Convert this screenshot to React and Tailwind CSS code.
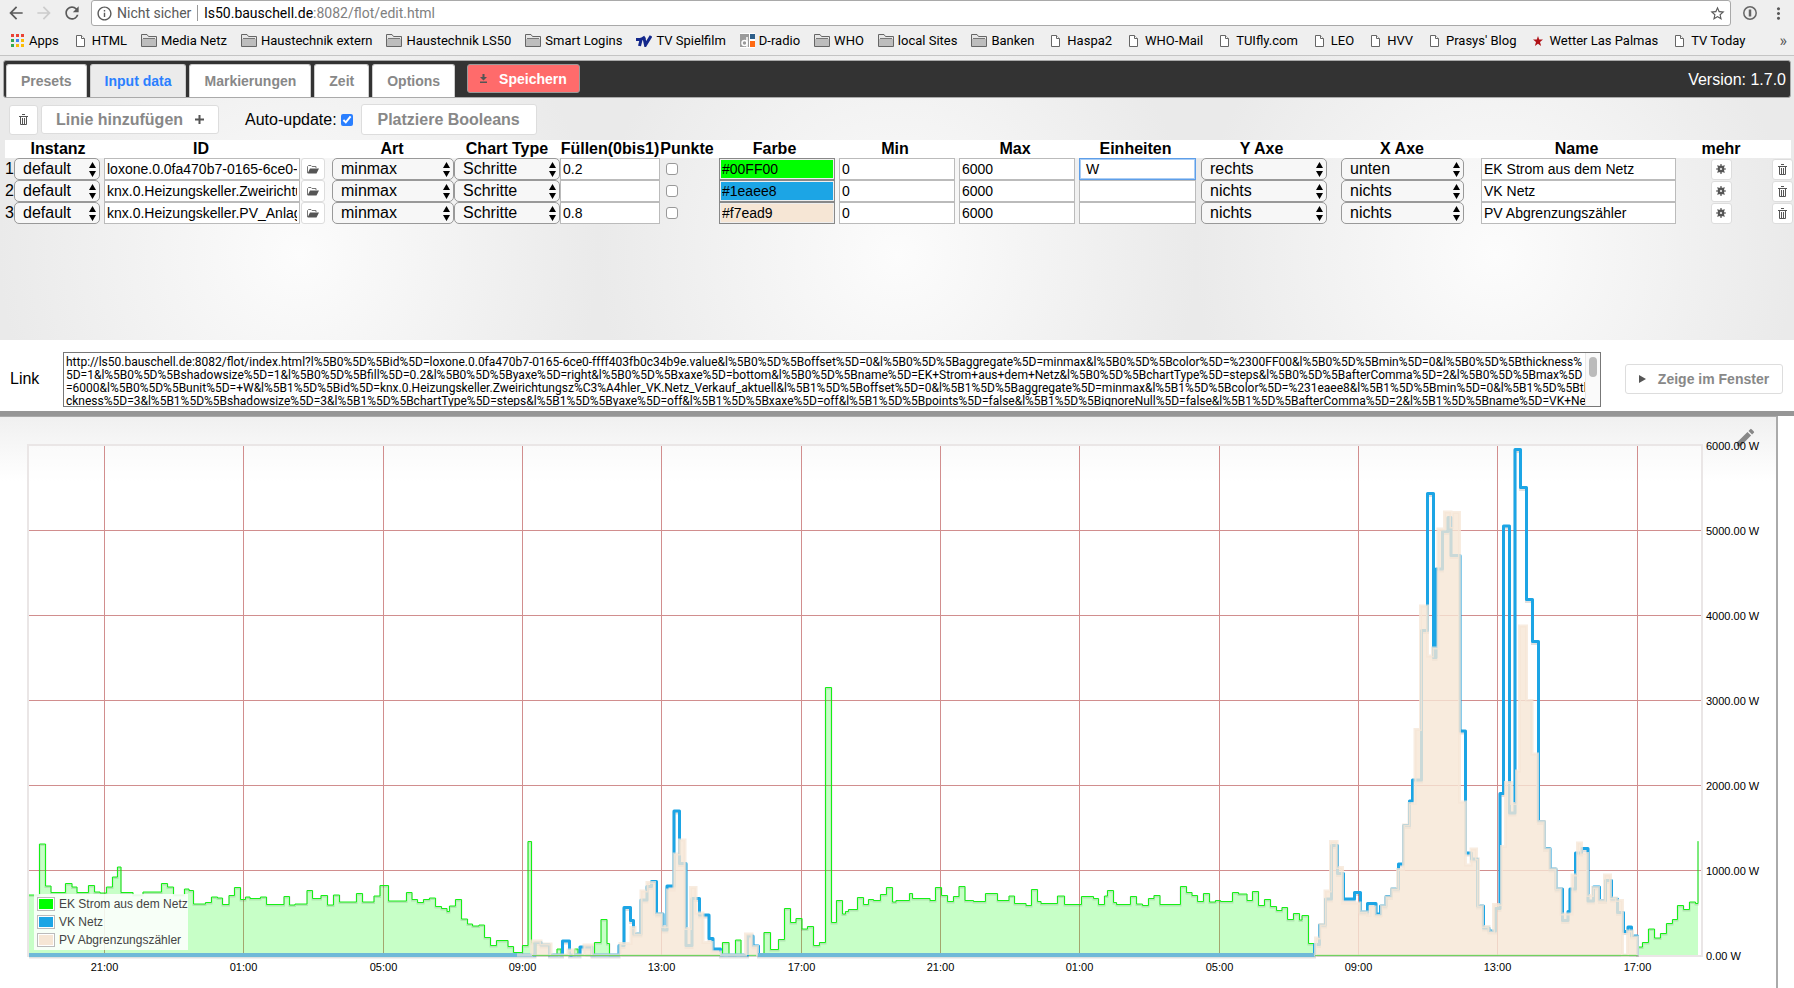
import { useState } from 'react'
import { MdArrowBack, MdArrowForward, MdRefresh, MdInfoOutline, MdStarBorder, MdMoreVert, MdEdit } from 'react-icons/md'

// ---- Data -------------------------------------------------------------------
const BOOKMARKS = [
    { label: 'Apps', icon: 'apps' },
    { label: 'HTML', icon: 'page' },
    { label: 'Media Netz', icon: 'folder' },
    { label: 'Haustechnik extern', icon: 'folder' },
    { label: 'Haustechnik LS50', icon: 'folder' },
    { label: 'Smart Logins', icon: 'folder' },
    { label: 'TV Spielfilm', icon: 'tv' },
    { label: 'D-radio', icon: 'dradio' },
    { label: 'WHO', icon: 'folder' },
    { label: 'local Sites', icon: 'folder' },
    { label: 'Banken', icon: 'folder' },
    { label: 'Haspa2', icon: 'page' },
    { label: 'WHO-Mail', icon: 'page' },
    { label: 'TUIfly.com', icon: 'page' },
    { label: 'LEO', icon: 'page' },
    { label: 'HVV', icon: 'page' },
    { label: "Prasys' Blog", icon: 'page' },
    { label: 'Wetter Las Palmas', icon: 'star' },
    { label: 'TV Today', icon: 'page' },
]

const TABS = ['Presets', 'Input data', 'Markierungen', 'Zeit', 'Options']

const COLUMNS = [
    { label: '', width: 9 },
    { label: 'Instanz', width: 88 },
    { label: 'ID', width: 198 },
    { label: '', width: 30 },
    { label: 'Art', width: 124 },
    { label: 'Chart Type', width: 106 },
    { label: 'Füllen(0bis1)', width: 100 },
    { label: 'Punkte', width: 54 },
    { label: 'Farbe', width: 121 },
    { label: 'Min', width: 120 },
    { label: 'Max', width: 120 },
    { label: 'Einheiten', width: 121 },
    { label: 'Y Axe', width: 131 },
    { label: 'X Axe', width: 150 },
    { label: 'Name', width: 199 },
    { label: 'mehr', width: 90 },
    { label: '', width: 25 },
]

const LINES = [
    { id: 'loxone.0.0fa470b7-0165-6ce0-ffff403fb0c34b9e.value', fill: '0.2', color: '#00FF00', unit: ' W', yaxe: 'rechts', xaxe: 'unten', name: 'EK Strom aus dem Netz' },
    { id: 'knx.0.Heizungskeller.Zweirichtungszähler_VK.Netz_Verkauf_aktuell', fill: '', color: '#1eaee8', unit: '', yaxe: 'nichts', xaxe: 'nichts', name: 'VK Netz' },
    { id: 'knx.0.Heizungskeller.PV_Anlage.Abgrenzungszähler', fill: '0.8', color: '#f7ead9', unit: '', yaxe: 'nichts', xaxe: 'nichts', name: 'PV Abgrenzungszähler' },
]

const COLOR_CLASS = {
    '#00FF00': 'bg-[#00ff00]',
    '#1eaee8': 'bg-[#1ca5e5]',
    '#f7ead9': 'bg-[#f6e6d5]',
}

const LINK = [
    'http://ls50.bauschell.de:8082/flot/index.html?l%5B0%5D%5Bid%5D=loxone.0.0fa470b7-0165-6ce0-ffff403fb0c34b9e.value&l%5B0%5D%5Boffset%5D=0&l%5B0%5D%5Baggregate%5D=minmax&l%5B0%5D%5Bcolor%5D=%2300FF00&l%5B0%5D%5Bmin%5D=0&l%5B0%5D%5Bthickness%',
    '5D=1&l%5B0%5D%5Bshadowsize%5D=1&l%5B0%5D%5Bfill%5D=0.2&l%5B0%5D%5Byaxe%5D=right&l%5B0%5D%5Bxaxe%5D=bottom&l%5B0%5D%5Bname%5D=EK+Strom+aus+dem+Netz&l%5B0%5D%5BchartType%5D=steps&l%5B0%5D%5BafterComma%5D=2&l%5B0%5D%5Bmax%5D',
    '=6000&l%5B0%5D%5Bunit%5D=+W&l%5B1%5D%5Bid%5D=knx.0.Heizungskeller.Zweirichtungsz%C3%A4hler_VK.Netz_Verkauf_aktuell&l%5B1%5D%5Boffset%5D=0&l%5B1%5D%5Baggregate%5D=minmax&l%5B1%5D%5Bcolor%5D=%231eaee8&l%5B1%5D%5Bmin%5D=0&l%5B1%5D%5Bthi',
    'ckness%5D=3&l%5B1%5D%5Bshadowsize%5D=3&l%5B1%5D%5BchartType%5D=steps&l%5B1%5D%5Byaxe%5D=off&l%5B1%5D%5Bxaxe%5D=off&l%5B1%5D%5Bpoints%5D=false&l%5B1%5D%5BignoreNull%5D=false&l%5B1%5D%5BafterComma%5D=2&l%5B1%5D%5Bname%5D=VK+Netz',
].join('\n')

// Step series: x, y pairs in chart units, each value holds until the next x
const EK_STROM = [
    29, 895, 39.5, 844, 45.5, 886, 51, 892.5, 65.5, 883.5, 72, 887, 77, 892.5, 88.5, 885.5, 94.5, 892, 100, 893, 106.5, 887, 112.5, 877, 117.5, 867, 121, 892.5, 133, 895,
    143, 892, 161.5, 883.5, 167.5, 887, 173.5, 895, 184.5, 889, 189, 890.5, 193.5, 904, 205.5, 902.5, 211.5, 897, 217.5, 898, 222.5, 904.5, 229, 895.5, 234.5, 887.5,
    240.5, 899.5, 245.5, 897, 250, 898.5, 260.5, 897, 266.5, 904.5, 284, 896.5, 289.5, 905, 295, 904, 307, 890.5, 312.5, 898.5, 321, 895.5, 327.5, 905, 333.5, 895,
    339.5, 902, 356.5, 893.5, 362.5, 902, 374, 896, 380, 885.5, 388.5, 901, 406.5, 892.5, 412, 899.5, 417.5, 902.5, 423.5, 899.5, 429.5, 898, 435.5, 906.5, 441.5, 908.5,
    447, 911.5, 449.5, 906, 455.5, 899.5, 461.5, 919, 467.5, 924, 472.5, 926, 479, 925, 484.5, 937.5, 490.5, 945.5, 496.5, 940.5, 508, 946.5, 513.5, 952.5, 522.5, 945.5,
    528, 841.5, 531.5, 943, 536, 955, 557, 949, 561, 955, 574.5, 949, 578, 955, 594.5, 942.5, 601, 919.5, 607, 943.5, 609.5, 955, 722.5, 942.5, 729, 955, 735.5, 940,
    741, 955, 764, 932.5, 770.5, 949.5, 778.5, 939.5, 784.5, 908.5, 790.5, 922.5, 796, 918.5, 802, 929, 807.5, 926.5, 813.5, 945.5, 819.5, 942.5, 825.5, 687.5,
    831.5, 922.5, 836.5, 900.5, 842.5, 914, 845.5, 911.5, 848.5, 909.5, 857.5, 897.5, 863.5, 904.5, 868.5, 899.5, 873.5, 900.5, 880.5, 894.5, 886.5, 887.5, 892.5, 902,
    896, 900.5, 909.5, 893.5, 912.5, 898.5, 930, 900.5, 935.5, 887.5, 941.5, 895.5, 947.5, 901.5, 953.5, 896.5, 959, 886.5, 965, 900.5, 973.5, 901.5, 985.5, 893.5,
    997.5, 900.5, 1009, 896, 1014.5, 903.5, 1026, 905.5, 1031.5, 889.5, 1037.5, 901.5, 1041, 903.5, 1057.5, 896, 1064.5, 904.5, 1081.5, 896.5, 1093.5, 898.5,
    1098.5, 904.5, 1104.5, 896, 1107.5, 890.5, 1113.5, 902.5, 1116.5, 904.5, 1130.5, 896.5, 1136.5, 904, 1142.5, 905.5, 1148.5, 898.5, 1154, 895.5, 1160, 904.5,
    1180.5, 886.5, 1186.5, 892.5, 1192, 895.5, 1197.5, 901.5, 1203.5, 893.5, 1209.5, 902, 1215.5, 900.5, 1220.5, 901.5, 1232.5, 892.5, 1238.5, 894, 1247, 900.5,
    1252.5, 891.5, 1258.5, 905.5, 1264.5, 899.5, 1270.5, 906.5, 1276.5, 910.5, 1282, 907.5, 1287.5, 919.5, 1293.5, 913.5, 1299.5, 920, 1302, 915.5, 1308.5, 943.5,
    1314, 955, 1637.5, 947, 1642.5, 942.5, 1648.5, 929, 1654.5, 938, 1660.5, 933.5, 1666.5, 923.5, 1672.5, 919.5, 1677.5, 905.5, 1683.5, 909.5, 1689.5, 902,
    1695.5, 903.5, 1698, 841,
]

const VK_NETZ = [
    29, 955, 535, 942.5, 541, 945, 549.5, 955, 562.5, 941, 569.5, 955, 580, 947, 592, 955, 619, 945.5, 624, 907.5, 630.5, 920.5, 633.5, 934, 641, 900, 647, 886.5,
    651.5, 881.5, 656.5, 914, 663, 930, 667, 886, 674, 811, 679.5, 863.5, 686, 945.5, 692, 898.5, 699.5, 915, 709, 938.5, 713, 949, 720.5, 955, 747.5, 936, 753, 946,
    758.5, 955, 1314.5, 944.5, 1319.5, 925, 1325.5, 899, 1331.5, 845.5, 1337.5, 873.5, 1343.5, 899, 1354.5, 892.5, 1360.5, 912, 1367.5, 903.5, 1376, 914, 1380.5, 906,
    1386, 896.5, 1391.5, 889, 1398.5, 864, 1403.5, 825.5, 1409.5, 801, 1412.5, 780, 1421.5, 630.5, 1427.5, 493.5, 1433.5, 657.5, 1436, 569, 1442.5, 531.5, 1448, 517.5,
    1451, 555.5, 1460, 731, 1465.5, 853, 1471.5, 859, 1477.5, 906, 1483.5, 928, 1489, 931, 1495.5, 908.5, 1500, 793.5, 1503.5, 526, 1509.5, 813, 1515, 449.5,
    1520.5, 487.5, 1526.5, 599.5, 1532.5, 641.5, 1538.5, 821.5, 1544.5, 848.5, 1550, 869, 1556, 889, 1562.5, 920.5, 1568, 911.5, 1570, 889, 1575.5, 853, 1581.5, 848.5,
    1588, 901, 1593.5, 887, 1599.5, 900.5, 1605.5, 880.5, 1611.5, 899, 1617.5, 912.5, 1623.5, 931.5, 1628, 927, 1631.5, 936, 1637.5, 955,
]

const PV_ZAEHLER = [
    517, 955, 531.5, 941, 541, 944, 551, 955, 568, 950, 574, 955, 584, 945, 592.5, 955, 620, 943.5, 631, 927.5, 635, 934, 641, 891, 647, 882.5, 654.5, 914, 662, 926.5,
    667.5, 890, 674, 854, 679.5, 840, 685, 928.5, 690.5, 887.5, 696, 913, 703, 942.5, 712, 952, 720.5, 955, 745.5, 934, 752, 946.5, 757.5, 955, 1315.5, 938, 1320, 924.5,
    1325, 891, 1330.5, 841.5, 1337, 867.5, 1342.5, 903, 1360, 912, 1367.5, 915.5, 1370, 907, 1375, 915.5, 1381.5, 906, 1386, 897, 1391.5, 889, 1397.5, 869.5, 1403.5, 825,
    1409, 803.5, 1415, 729.5, 1420.5, 606, 1427.5, 656, 1432.5, 648, 1438, 529, 1444.5, 512, 1451, 527, 1452.5, 512.5, 1459.5, 802, 1465.5, 865, 1471, 849, 1476.5, 859,
    1478.5, 906, 1482.5, 926.5, 1489, 932, 1493.5, 904.5, 1501.5, 846.5, 1505.5, 782.5, 1511.5, 803.5, 1516.5, 771, 1519.5, 626, 1526.5, 700.5, 1532, 754, 1537.5, 821.5,
    1544.5, 849, 1549.5, 869, 1556, 889, 1561, 914, 1572, 875, 1577.5, 843, 1581.5, 853.5, 1587.5, 895.5, 1592.5, 887.5, 1598.5, 900.5, 1604.5, 875, 1610.5, 898,
    1616.5, 900.5, 1622.5, 955, 1627.5, 931, 1632.5, 937, 1637.5, 955,
]

const X_TICKS = [
    [104.5, '21:00'], [243.5, '01:00'], [383.5, '05:00'], [522.5, '09:00'], [661.5, '13:00'], [801.5, '17:00'],
    [940.5, '21:00'], [1079.5, '01:00'], [1219.5, '05:00'], [1358.5, '09:00'], [1497.5, '13:00'], [1637.5, '17:00'],
]

const Y_TICKS = [
    [445, '6000.00 W'], [530.5, '5000.00 W'], [615.5, '4000.00 W'], [700.5, '3000.00 W'],
    [785.5, '2000.00 W'], [870.5, '1000.00 W'], [955, '0.00 W'],
]

const LEGEND = [
    { label: 'EK Strom aus dem Netz', color: '#00ff00' },
    { label: 'VK Netz', color: '#1ca5e5' },
    { label: 'PV Abgrenzungszähler', color: '#f6e6d5' },
]

// ---- Helpers ----------------------------------------------------------------
const BASE = 955

function stepPath(series) {
    let d = `M${series[0]} ${series[1]}`
    for (let i = 2; i < series.length; i += 2) d += `H${series[i]}V${series[i + 1]}`
    return d
}

function areaPath(series) {
    return `${stepPath(series)}V${BASE}H${series[0]}Z`
}

// ---- Icons ------------------------------------------------------------------
function TrashIcon() {
    return (
        <svg width="9" height="11" viewBox="0 0 9 11" fill="none" stroke="#555">
            <path d="M0 2.5h9M3 .5h3" />
            <path d="M1.5 3v7.5h6V3M3.5 4v6M5.5 4v6" />
        </svg>
    )
}

function GearIcon() {
    return (
        <svg width="10" height="10" viewBox="0 0 10 10" fill="none" stroke="#555">
            <circle cx="5" cy="5" r="2.4" strokeWidth="2" />
            <path d="M5 0v10M0 5h10M1.5 1.5l7 7M8.5 1.5l-7 7" strokeWidth="1.2" />
            <circle cx="5" cy="5" r="1" fill="#fff" stroke="none" />
        </svg>
    )
}

function OpenFolderIcon() {
    return (
        <svg width="12" height="9" viewBox="0 0 12 9">
            <path d="M.5 8V1.5l1-1h2.5l1 1h4V3" fill="none" stroke="#777" />
            <path d="M3 3.5h9L9.5 8.5H.5z" fill="#555" />
        </svg>
    )
}

function BookmarkIcon({ type }) {
    if (type === 'apps') {
        const colors = ['#ea4335', '#ea4335', '#ea4335', '#34a853', '#4285f4', '#fbbc05', '#34a853', '#fbbc05', '#fbbc05']
        return (
            <svg width="13" height="13" viewBox="0 0 13 13">
                {colors.map((c, i) => (
                    <rect key={i} x={(i % 3) * 5} y={Math.floor(i / 3) * 5} width="3" height="3" fill={c} />
                ))}
            </svg>
        )
    }
    if (type === 'folder') {
        return (
            <svg width="16" height="13" viewBox="0 0 16 13">
                <path d="M.5 12.5V.5H6l1.5 2h8v10z" fill="#e6e6e6" stroke="#666" />
                <path d="M1 5h14v7H1z" fill="#bdbdbd" />
                <path d="M2 4.5h12" stroke="#777" />
            </svg>
        )
    }
    if (type === 'tv') {
        return (
            <svg width="16" height="12" viewBox="0 0 16 12" fill="none" stroke="#14288c">
                <path d="M0 4.5h5L9 2M5.5 3L3.5 11" strokeWidth="3" />
                <path d="M8 3l1.5 7L15 1" strokeWidth="3" />
            </svg>
        )
    }
    if (type === 'dradio') {
        return (
            <svg width="15" height="15" viewBox="0 0 15 15">
                <path d="M0 0h15v15H0z" fill="#fff" />
                <path d="M0 1h9v13H0z" fill="#9b9b9b" />
                <circle cx="4.5" cy="10" r="2.5" fill="none" stroke="#fff" strokeWidth="1.5" />
                <path d="M7 4v10" stroke="#fff" strokeWidth="1.5" />
                <path d="M10 1h5v5h-5z" fill="#2d5f8b" />
                <path d="M10 8h5v6h-5z" fill="#ff6a13" />
            </svg>
        )
    }
    if (type === 'star') {
        return (
            <svg width="10" height="10" viewBox="0 0 10 10">
                <path d="M5 0l1.2 3.6H10L7 6l1.1 4L5 7.7 1.9 10 3 6 0 3.6h3.8z" fill="#b01116" />
            </svg>
        )
    }
    return (
        <svg width="9" height="12" viewBox="0 0 9 12" fill="#fff" stroke="#666">
            <path d="M.5.5h5l3 3v8h-8z" />
            <path d="M5.5.5v3h3" />
        </svg>
    )
}

// ---- Browser chrome ---------------------------------------------------------
function BrowserBar() {
    return (
        <header className="bg-[#efefef] border-b border-[#c4c4c4] font-['Roboto',sans-serif]">
            <div className="flex items-center h-[26px] pl-1.5 text-[#5a5a5a]">
                <button aria-label="Zurück" className="w-7"><MdArrowBack size={20} /></button>
                <button aria-label="Vor" className="w-7 text-[#ccc]"><MdArrowForward size={20} /></button>
                <button aria-label="Neu laden" className="w-[29px]"><MdRefresh size={20} /></button>
                <div className="flex flex-1 items-center h-[26px] bg-white border border-[#a9a9a9] rounded-[3px] pl-1 pr-1">
                    <MdInfoOutline size={17} />
                    <span className="ml-1 text-sm">Nicht sicher</span>
                    <span className="mx-1.5 h-4 w-px bg-[#999]" />
                    <span className="flex-1 text-sm text-[#808080]">
                        <span className="text-black">ls50.bauschell.de</span>:8082/flot/edit.html
                    </span>
                    <button aria-label="Lesezeichen"><MdStarBorder size={17} /></button>
                </div>
                <button aria-label="Passwörter" className="ml-3">
                    <svg width="14" height="14" viewBox="0 0 14 14" fill="none" stroke="#666">
                        <circle cx="7" cy="7" r="6.2" strokeWidth="1.5" />
                        <path d="M7 3.5v7" strokeWidth="2.5" />
                    </svg>
                </button>
                <button aria-label="Menü" className="ml-3 mr-1.5"><MdMoreVert size={19} /></button>
            </div>
            <nav className="flex items-center h-[29px] pl-[10px] pr-[7px] text-[13px] text-black whitespace-nowrap">
                <div className="flex flex-1 items-center gap-[14px]">
                    {BOOKMARKS.map((b) => (
                        <a key={b.label} href="#" className="flex items-center gap-1">
                            <span className="flex min-w-[15px] justify-center"><BookmarkIcon type={b.icon} /></span>
                            {b.label}
                        </a>
                    ))}
                </div>
                <button aria-label="Weitere Lesezeichen" className="text-base text-[#555]">»</button>
            </nav>
        </header>
    )
}

// ---- Form controls ----------------------------------------------------------
function Select({ value, label }) {
    return (
        <div className="relative">
            <select
                aria-label={label}
                defaultValue={value}
                className="block w-full h-[22px] appearance-none rounded-[5px] border border-[#999] bg-[#f7f7f7] pl-2 text-base leading-5"
            >
                <option>{value}</option>
            </select>
            <svg className="pointer-events-none absolute right-1 top-1 h-[15px] w-[7px]" viewBox="0 0 7 15">
                <path d="M3.5 0L7 6H0zM3.5 15L7 9H0z" fill="#000" />
            </svg>
        </div>
    )
}

function TextInput({ value, label, className = 'bg-white border-[#bbb]' }) {
    return (
        <input
            type="text"
            aria-label={label}
            defaultValue={value}
            className={`block w-full h-[22px] border px-0.5 text-sm outline-none ${className}`}
        />
    )
}

function IconButton({ label, className = '', children }) {
    return (
        <button aria-label={label} className={`flex items-center justify-center rounded-[3px] border border-[#ddd] bg-white ${className}`}>
            {children}
        </button>
    )
}

// ---- Input data -------------------------------------------------------------
function TabBar({ active, onSelect }) {
    return (
        <div className="flex h-[38px] items-end rounded-[3px] border border-[#aaa] bg-[#333] pl-0.5 pr-1">
            <div className="flex items-end gap-[3px] text-sm font-bold">
                {TABS.map((t) => (
                    <button
                        key={t}
                        onClick={() => onSelect(t)}
                        className={`h-[33px] rounded-t-[3px] border border-b-0 border-[#ccc] px-[14px] ${t === active ? 'bg-[#ebebeb] text-[#2a7fff]' : 'bg-white text-[#888]'}`}
                    >
                        {t}
                    </button>
                ))}
            </div>
            <button className="ml-3 mb-1 flex h-[29px] w-[113px] items-center gap-3 rounded-[3px] border border-[#999] bg-[#ff6b6b] pl-3 text-sm font-bold text-white">
                <svg width="7" height="9" viewBox="0 0 7 9" fill="#555">
                    <path d="M2.5 0h2v3H7L3.5 6.5 0 3h2.500zM0 7.5h7V9H0z" />
                </svg>
                Speichern
            </button>
            <span className="ml-auto mb-[5px] text-base text-white">Version: 1.7.0</span>
        </div>
    )
}

function LinesTable() {
    return (
        <table className="w-full table-fixed text-black">
            <colgroup>
                {COLUMNS.map((c, i) => <col key={i} style={{ width: c.width }} />)}
            </colgroup>
            <thead>
                <tr className="h-[18px] bg-white">
                    {COLUMNS.map((c, i) => (
                        <th key={i} className="p-0 text-base leading-[18px] font-bold whitespace-nowrap">{c.label}</th>
                    ))}
                </tr>
            </thead>
            <tbody>
                {LINES.map((l, i) => (
                    <tr key={l.name} className="h-[22px]">
                        <td className="p-0 text-base leading-5">{i + 1}</td>
                        <td className="p-0 pr-0.5"><Select value="default" label="Instanz" /></td>
                        <td className="p-0 pl-0.5"><TextInput value={l.id} label="ID" /></td>
                        <td className="p-0 pl-px"><IconButton label="ID wählen" className="h-[22px] w-6"><OpenFolderIcon /></IconButton></td>
                        <td className="p-0 pl-0.5"><Select value="minmax" label="Art" /></td>
                        <td className="p-0"><Select value="Schritte" label="Chart Type" /></td>
                        <td className="p-0"><TextInput value={l.fill} label="Füllen" /></td>
                        <td className="p-0 pl-1.5">
                            <input type="checkbox" aria-label="Punkte" className="block size-3 appearance-none rounded-[3px] border border-[#999] bg-white" />
                        </td>
                        <td className="p-0 pl-[5px]">
                            <TextInput value={l.color} label="Farbe" className={`border-[#888] shadow-[inset_0_0_0_1px_#eee] ${COLOR_CLASS[l.color]}`} />
                        </td>
                        <td className="p-0 pl-1"><TextInput value="0" label="Min" /></td>
                        <td className="p-0 pl-1"><TextInput value="6000" label="Max" /></td>
                        <td className="p-0 pl-1">
                            <TextInput
                                value={l.unit}
                                label="Einheiten"
                                className={l.unit ? 'bg-white border-[#5e9ee8] shadow-[inset_0_0_0_1px_#a9cdf5]' : 'bg-white border-[#bbb]'}
                            />
                        </td>
                        <td className="p-0 pl-[5px]"><Select value={l.yaxe} label="Y Axe" /></td>
                        <td className="p-0 pl-[14px] pr-[13px]"><Select value={l.xaxe} label="X Axe" /></td>
                        <td className="p-0 pl-1"><TextInput value={l.name} label="Name" /></td>
                        <td className="p-0"><IconButton label="Mehr" className="mx-auto h-[21px] w-[21px]"><GearIcon /></IconButton></td>
                        <td className="p-0 pl-[6px]"><IconButton label="Löschen" className="h-[21px] w-[21px]"><TrashIcon /></IconButton></td>
                    </tr>
                ))}
            </tbody>
        </table>
    )
}

function InputData() {
    return (
        <section className="pb-[116px]">
            <div className="flex h-[42px] items-center pl-1 pt-px">
                <IconButton label="Alle löschen" className="h-[30px] w-[29px]"><TrashIcon /></IconButton>
                <button className="ml-[3px] flex h-[29px] w-[178px] items-center justify-center gap-3 rounded-[3px] border border-[#ddd] bg-white text-base font-bold text-[#888]">
                    Linie hinzufügen
                    <svg width="9" height="9" viewBox="0 0 9 9" stroke="#555" strokeWidth="2"><path d="M4.5 0v9M0 4.5h9" /></svg>
                </button>
                <label className="ml-[26px] flex items-center gap-1 text-base text-black">
                    Auto-update:
                    <input type="checkbox" defaultChecked className="size-3 accent-[#2a7fff]" />
                </label>
                <button className="ml-2 h-[31px] w-[176px] rounded-[3px] border border-[#ddd] bg-white text-base font-bold text-[#888]">
                    Platziere Booleans
                </button>
            </div>
            <LinesTable />
        </section>
    )
}

function LinkBar() {
    return (
        <section className="flex h-[71px] items-center bg-white pl-[10px] pr-[11px] pt-[7px]">
            <label htmlFor="link" className="w-[53px] text-base text-black">Link</label>
            <div className="relative flex-1">
                <textarea
                    id="link"
                    defaultValue={LINK}
                    wrap="off"
                    className="block h-[55px] w-full resize-none overflow-hidden border border-[#777] bg-white px-0.5 pt-[3px] font-['Roboto',sans-serif] text-xs leading-[13px] text-black"
                />
                <div className="absolute inset-y-px right-px w-[15px] border-l border-[#e8e8e8] bg-[#fafafa]">
                    <div className="mx-auto mt-1 h-5 w-2 rounded-full bg-[#bbb]" />
                </div>
            </div>
            <button className="ml-6 flex h-[30px] w-[158px] items-center justify-center gap-3 rounded-[3px] border border-[#ddd] bg-white text-sm font-bold text-[#888]">
                <svg width="7" height="8" viewBox="0 0 7 8"><path d="M0 0l7 4-7 4z" fill="#555" /></svg>
                Zeige im Fenster
            </button>
        </section>
    )
}

// ---- Chart ------------------------------------------------------------------
function Chart() {
    return (
        <section className="mr-4 border-t border-r-2 border-[#aaa] bg-[linear-gradient(#f0f0f0,#ffffff_64px)]">
            <svg viewBox="0 417 1776 571" className="block h-auto w-full font-['Liberation_Sans',Arial,sans-serif]">
                <MdEdit x="1734" y="426" size={23} color="#888" />
                <path d="M28 445H1702V956H28z" fill="#fff" fillOpacity=".4" stroke="#eae6e6" strokeWidth="2" />

                {/* Grid */}
                <g stroke="#d18e8e">
                    {X_TICKS.map(([x]) => <path key={x} d={`M${x} 446V955`} />)}
                    {Y_TICKS.slice(1, -1).map(([y]) => <path key={y} d={`M29 ${y}H1701`} />)}
                </g>

                {/* EK Strom */}
                <path d={areaPath(EK_STROM)} fill="#00ff00" fillOpacity=".22" />
                <path d={stepPath(EK_STROM)} fill="none" stroke="#000" strokeOpacity=".1" strokeWidth="2" transform="translate(0 1)" />
                <path d={stepPath(EK_STROM)} fill="none" stroke="#15f015" strokeLinejoin="round" />

                {/* VK Netz */}
                <path d={stepPath(VK_NETZ)} fill="none" stroke="#000" strokeOpacity=".12" strokeWidth="3" transform="translate(0 2)" />
                <path d={stepPath(VK_NETZ)} fill="none" stroke="#1ca5e5" strokeWidth="3" strokeLinejoin="round" />

                {/* PV Abgrenzungszähler */}
                <path d={areaPath(PV_ZAEHLER)} fill="#f6e6d5" fillOpacity=".8" />
                <path d={stepPath(PV_ZAEHLER)} fill="none" stroke="#f6e6d5" strokeWidth="3" strokeOpacity=".75" />
                <path d="M29 955H517M758 955H1314" stroke="#6fb9d8" strokeWidth="4" />
                <path d="M532 955.5H720M1315 955.5H1637" stroke="#71d160" />

                {/* Axis labels */}
                <g fontSize="11" fill="#000">
                    {X_TICKS.map(([x, t]) => <text key={x} x={x} y="971" textAnchor="middle">{t}</text>)}
                    {Y_TICKS.map(([y, t]) => <text key={y} x="1706" y={y + 4.5}>{t}</text>)}
                </g>

                {/* Legend */}
                <rect x="34" y="894" width="154" height="56" fill="#fff" fillOpacity=".85" />
                {LEGEND.map((l, i) => (
                    <g key={l.label}>
                        <rect x="37.5" y={897.5 + i * 18} width="17" height="13" fill="#fff" stroke="#bbb" />
                        <rect x="39" y={899 + i * 18} width="14" height="10" fill={l.color} />
                        <text x="59" y={908 + i * 18} fontSize="12" fill="#444">{l.label}</text>
                    </g>
                ))}
            </svg>
        </section>
    )
}

// ---- Main Component ---------------------------------------------------------
export default function App() {
    const [tab, setTab] = useState('Input data')

    return (
        <div className="min-h-screen bg-white font-['Liberation_Sans',Arial,sans-serif]">
            <BrowserBar />
            <main>
                <div className="bg-[#eaeaea] bg-[radial-gradient(circle_at_50%_70%,#fcfcfc_0,#f3f3f3_150px,#eaeaea_300px)] bg-[size:33.34%_100%] px-[3px] pt-1">
                    <TabBar active={tab} onSelect={setTab} />
                    <div className="pl-0.5">
                        <InputData />
                    </div>
                </div>
                <LinkBar />
                <div className="h-[5px] bg-[#969696]" />
                <Chart />
            </main>
        </div>
    )
}
